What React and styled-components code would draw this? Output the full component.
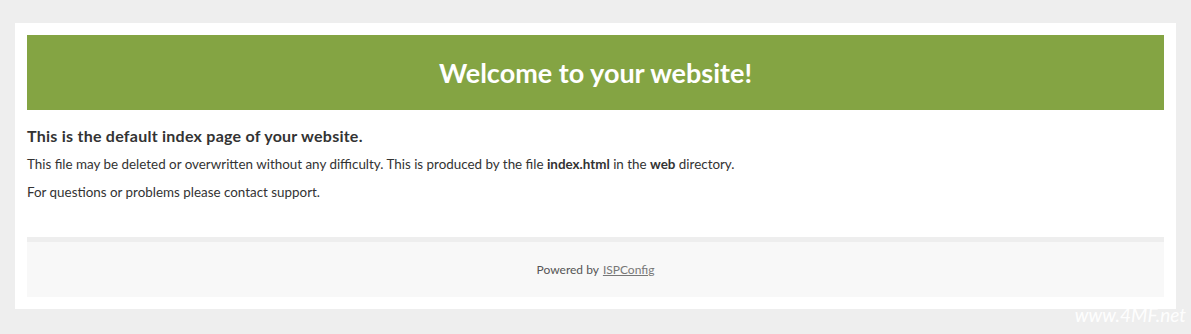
import React from 'react';
import styled, { createGlobalStyle } from 'styled-components';

const GlobalStyle = createGlobalStyle`
  html, body {
    margin: 0;
    padding: 0;
    background: #eeeeee;
  }
  body {
    font-family: Lato, "DejaVu Sans", sans-serif;
    color: #333333;
  }
`;

export default function App() {
  return (
    <>
      <GlobalStyle />
      <Page>
        <Wrapper>
          <Header>
            <Title>Welcome to your website!</Title>
          </Header>
          <Content>
            <Lead>This is the default index page of your website.</Lead>
            <Text>
              This file may be deleted or overwritten without any difficulty. This is produced by the file{' '}
              <b>index.html</b> in the <b>web</b> directory.
            </Text>
            <Text>For questions or problems please contact support.</Text>
          </Content>
          <Footer>
            Powered by <FooterLink href="#">ISPConfig</FooterLink>
          </Footer>
        </Wrapper>
        <Watermark>www.4MF.net</Watermark>
      </Page>
    </>
  );
}

const Page = styled.div`
  position: relative;
  padding: 23px 15px 25px;
  min-height: 334px;
  box-sizing: border-box;
`;

const Wrapper = styled.div`
  background: #ffffff;
  padding: 12px;
`;

const Header = styled.div`
  background: #84a443;
  height: 75px;
  display: flex;
  align-items: center;
  justify-content: center;
`;

const Title = styled.h1`
  margin: 0;
  color: #ffffff;
  font-size: 27px;
  font-weight: 700;
`;

const Content = styled.div`
  padding: 16px 0 27px;
`;

const Lead = styled.h2`
  margin: 0 0 8px;
  font-size: 16px;
  font-weight: 700;
  letter-spacing: 0.25px;
  line-height: 20px;
  color: #333333;
`;

const Text = styled.p`
  margin: 0 0 8px;
  font-size: 13.4px;
  line-height: 20px;
  color: #333333;
  b {
    font-weight: 700;
  }
`;

const Footer = styled.div`
  border-top: 5px solid #eeeeee;
  background: #f8f8f8;
  height: 55px;
  display: flex;
  align-items: center;
  justify-content: center;
  font-size: 12px;
  color: #555555;
`;

const FooterLink = styled.a`
  color: #777777;
  text-decoration: underline;
  margin-left: 4px;
`;

const Watermark = styled.div`
  position: absolute;
  right: 5px;
  bottom: 8px;
  font-size: 19px;
  font-style: italic;
  font-weight: 400;
  color: rgba(255, 255, 255, 0.95);
`;
